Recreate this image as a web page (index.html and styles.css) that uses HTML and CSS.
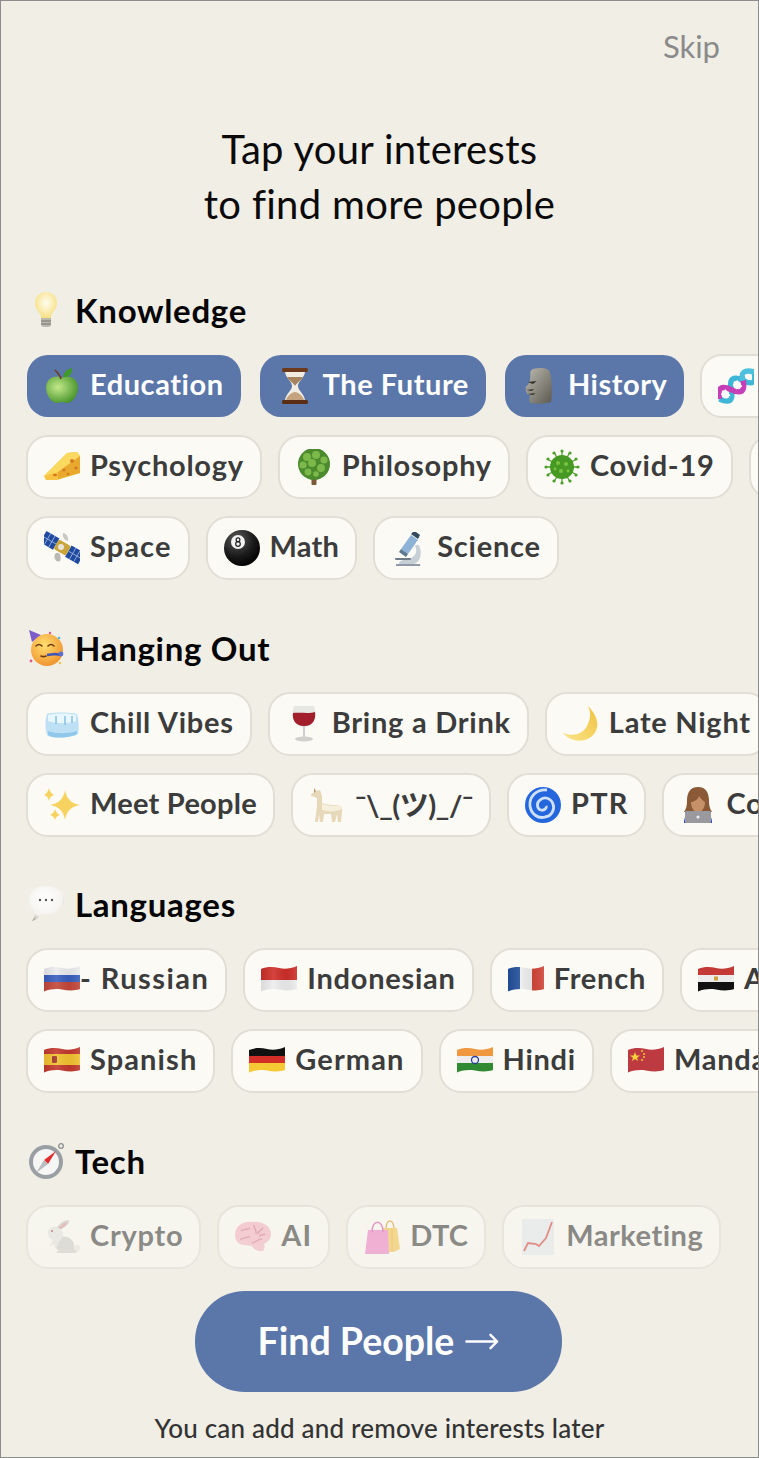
FILE: index.html
```html
<!DOCTYPE html>
<html lang="en">
<head>
<meta charset="utf-8">
<title>Interests</title>
<link rel="stylesheet" href="styles.css">
</head>
<body>
<svg class="sprite" width="0" height="0" aria-hidden="true"><defs>
<clipPath id="wave"><path d="M0 7C6 4.500 12 4.500 18 6S30 6.500 36 4V27C30 29 24 28.500 18 27.500S6 27 0 29.500Z"/></clipPath>
<radialGradient id="face" cx=".42" cy=".35" r=".7"><stop offset="0" stop-color="#ffe070"/><stop offset="1" stop-color="#f0902c"/></radialGradient>
<linearGradient id="gray" x1="0" x2="1" y1="0" y2="1"><stop offset="0" stop-color="#bdbbb0"/><stop offset="1" stop-color="#5c5950"/></linearGradient>
<linearGradient id="flagshade" x1="0" x2="1" y1="0" y2="0"><stop offset="0" stop-color="#000" stop-opacity=".08"/><stop offset=".35" stop-color="#fff" stop-opacity=".1"/><stop offset=".7" stop-color="#000" stop-opacity=".05"/><stop offset="1" stop-color="#fff" stop-opacity=".1"/></linearGradient>
</defs></svg>
<main class="screen">
  <div class="topbar"><span class="skip">Skip</span></div>
  <h1 class="title">Tap your interests<br>to find more people</h1>

  <section class="group group-first">
    <h2 class="group-title">
      <svg class="emoji" viewBox="0 0 36 36"><defs><radialGradient id="bulb" cx=".5" cy=".4" r=".6"><stop offset="0" stop-color="#fffdf0"/><stop offset="1" stop-color="#f6de7e"/></radialGradient></defs><path fill="url(#bulb)" d="M18 0C11 0 7 5 7 11c0 5 3 8 5 11 1 2 1 3 1 5h10c0-2 0-3 1-5 2-3 5-6 5-11C29 5 25 0 18 0Z"/><path fill="#b9b7ae" d="M13 26h10v6a3 3 0 0 1-3 3h-4a3 3 0 0 1-3-3Z"/><path stroke="#77756d" stroke-width="1" d="M13 29h10M13 32h10"/></svg>
      Knowledge
    </h2>
    <div class="row row-on">
      <div class="chip chip-on"><svg class="emoji" viewBox="0 0 36 36"><defs><radialGradient id="apple" cx=".38" cy=".4" r=".7"><stop offset="0" stop-color="#c4e98a"/><stop offset="1" stop-color="#3f8f25"/></radialGradient></defs><path fill="url(#apple)" d="M18 10C14 7 3 8 2 19c0 9 6 16 11 16 2 0 4-1 5-1s3 1 5 1c5 0 11-7 11-16C33 8 22 7 18 10Z"/><path fill="none" stroke="#6b3e1e" stroke-width="1.6" d="M17 11C16 7 14 5 11 2"/><path fill="#3f9a2a" d="M19 9C20 4 23 1 28 0 29 5 25 10 19 9Z"/></svg><span>Education</span></div>
      <div class="chip chip-on"><svg class="emoji" viewBox="0 0 36 36"><path fill="#f0ece2" d="M8 3h20c0 7-7 10-7 15s7 8 7 15H8c0-7 7-10 7-15S8 10 8 3Z"/><path fill="#a5845f" d="M10 9h16c-2 4-7 6-8 9-1-3-6-5-8-9Z"/><path fill="#c4a37e" d="M9 32c1-4 6-8 9-8s8 4 9 8Z"/><rect x="5" width="26" height="4" rx="1.5" fill="#6e3a1c"/><rect x="5" y="32" width="26" height="4" rx="1.5" fill="#5a2d14"/></svg><span>The Future</span></div>
      <div class="chip chip-on"><svg class="emoji" viewBox="0 0 36 36"><g transform="translate(-6 0) scale(1.300 1)"><path fill="url(#gray)" d="M13 1c6-2 12-1 13 3 2 8 2 21 1 30-5 2-12 2-16 1-1-3-1-5 0-8-2 0-3-1-3-3-1-1-1-2 0-3-1-1-1-2 1-4 2-3 2-7 2-11 0-2 0-4 2-5Z"/><path fill="#34322d" d="M9 14l7-1-3 3Zm-1 8 6-1-2 2Zm1 4 6-1-2 2Z"/></g></svg><span>History</span></div>
      <div class="chip chip-after-on"><svg class="emoji" viewBox="0 0 36 36"><g fill="none" stroke-width="5.500" transform="rotate(-38 18 18)"><path stroke="#3fb6d6" d="M-3 18C2 28 7 28 12 18S22 8 27 18S36 28 41 18"/><path stroke="#c63fb9" d="M-3 18C2 8 7 8 12 18S22 28 27 18"/><path stroke="#4cc0dc" d="M27 18C30 10 35 10 41 18"/><path stroke="#fff" stroke-width="1.600" d="M2 15v6M7 14v8M17 15v6M22 14v8M32 15v6"/></g></svg><span>Biology</span></div>
    </div>
    <div class="row">
      <div class="chip"><svg class="emoji" viewBox="0 0 36 36"><path fill="#f7c341" d="M0 27 23 4 33 3 36 7V24L13 31 2 31Z"/><path fill="#fbd860" d="M0 27 23 4 33 3 36 7 14 23Z"/><path fill="#e9a92d" d="M14 23 36 7V24L14 30Z"/><g fill="#d47a22"><circle cx="20" cy="21" r="1.6"/><circle cx="28" cy="12" r="2"/><circle cx="32" cy="19" r="1.6"/><ellipse cx="11" cy="26" rx="2.2" ry="1.2"/><circle cx="24" cy="25" r="1.3"/></g></svg><span>Psychology</span></div>
      <div class="chip"><svg class="emoji" viewBox="0 0 36 36"><rect x="15.5" y="26" width="5" height="10" rx="1" fill="#7a5a3a"/><circle cx="18" cy="15" r="16" fill="#4c8a2e"/><g fill="#7cb84a"><circle cx="11" cy="8" r="4"/><circle cx="20" cy="6" r="4"/><circle cx="28" cy="11" r="3.6"/><circle cx="7" cy="16" r="3.6"/><circle cx="16" cy="14" r="4"/><circle cx="25" cy="19" r="4"/><circle cx="12" cy="23" r="3.4"/><circle cx="20" cy="25" r="2.8"/></g></svg><span>Philosophy</span></div>
      <div class="chip"><svg class="emoji" viewBox="0 0 36 36"><g stroke="#4f9e2c" stroke-width="1.3"><path d="M1 18h34M3 26 33 10M10 33 26 3M18 1v34M26 33 10 3M33 26 3 10"/></g><g fill="#4f9e2c"><circle cx="34" cy="18" r="1.6"/><circle cx="32" cy="26" r="1.6"/><circle cx="26" cy="32" r="1.6"/><circle cx="18" cy="34" r="1.6"/><circle cx="10" cy="32" r="1.6"/><circle cx="4" cy="26" r="1.6"/><circle cx="2" cy="18" r="1.6"/><circle cx="4" cy="10" r="1.6"/><circle cx="10" cy="4" r="1.6"/><circle cx="18" cy="2" r="1.6"/><circle cx="26" cy="4" r="1.6"/><circle cx="32" cy="10" r="1.6"/></g><circle cx="18" cy="18" r="12" fill="#469a24"/><g fill="#7dc142"><circle cx="14" cy="14" r="2"/><circle cx="22" cy="15" r="2"/><circle cx="17" cy="22" r="2"/><circle cx="24" cy="22" r="1.4"/><circle cx="11" cy="20" r="1.4"/></g></svg><span>Covid-19</span></div>
      <div class="chip chip-stub"></div>
    </div>
    <div class="row">
      <div class="chip"><svg class="emoji" viewBox="0 0 36 36"><g transform="rotate(30 18 18)"><rect x="-4" y="11" width="15" height="13" fill="#1f4aa0"/><rect x="25" y="11" width="15" height="13" fill="#1f4aa0"/><path stroke="#9fb6dd" stroke-width=".8" d="M1 11v13M6 11v13M30 11v13M35 11v13M-4 17.5h15M25 17.5h15"/><rect x="11" y="12" width="14" height="11" rx="2" fill="#c9a53c"/></g><circle cx="17" cy="17" r="3" fill="#e8e4dc"/><path fill="#b9b9b4" d="M11 24c4-4 7 2 5 7-3 2-7-2-5-7Z"/><path fill="#c8c8c4" d="M19 3c3 0 6 4 5 8-3 0-6-4-5-8Z"/></svg><span class="ls-wide">Space</span></div>
      <div class="chip"><svg class="emoji" viewBox="0 0 36 36"><defs><radialGradient id="ball" cx=".35" cy=".25" r=".8"><stop offset="0" stop-color="#5a5a5a"/><stop offset=".6" stop-color="#1a1a1a"/><stop offset="1" stop-color="#000"/></radialGradient></defs><circle cx="18" cy="18" r="18" fill="url(#ball)"/><circle cx="14" cy="12" r="7" fill="#f2f2f2"/><g fill="none" stroke="#222" stroke-width="1.2"><circle cx="14" cy="9.8" r="1.9"/><circle cx="14" cy="14" r="2.3"/></g></svg><span class="ls-tight">Math</span></div>
      <div class="chip"><svg class="emoji" viewBox="0 0 36 36"><path fill="#8f9aa6" d="M5 34h24a2 2 0 0 1 0 2H5Z"/><path fill="#c6ced6" d="M8 34c0-4 5-4 9-5 8-2 10-8 7-13l3-2c5 7 3 18-4 20Z"/><path fill="#8fb3d6" d="M20 5 27 10 17 24l-7-5Z"/><path fill="#33495e" d="M22 2h3l4 3-2 4-7-5Z"/><path fill="#5e7890" d="M10 19l7 5-2 3-7-5Z"/><rect x="4" y="28" width="16" height="2" rx="1" fill="#6c7a88"/><circle cx="27" cy="13" r="2" fill="#fff"/></svg><span>Science</span></div>
    </div>
  </section>

  <section class="group">
    <h2 class="group-title">
      <svg class="emoji" viewBox="0 0 36 36"><path fill="#7c5cc8" d="M1 0 13 5 4 12Z"/><circle cx="19" cy="20" r="16" fill="url(#face)"/><g fill="none" stroke="#6b3a12" stroke-width="1.6" stroke-linecap="round"><path d="M8 16c2-2 4-2 6 0M20 16c2-2 4-2 6 0M13 26c2 1 3 1 5 0"/></g><path fill="none" stroke="#4254b5" stroke-width="2.6" d="M19 25l8-1 6 1"/><circle cx="33" cy="24" r="2.4" fill="#5c6fd0"/><g fill="#e2588a"><circle cx="3" cy="31" r="1.4"/><circle cx="22" cy="3" r="1.2"/><circle cx="31" cy="8" r="1.3" fill="#4fb7df"/><circle cx="32" cy="33" r="1.2" fill="#f2c53d"/></g></svg>
      Hanging Out
    </h2>
    <div class="row">
      <div class="chip"><svg class="emoji" viewBox="0 0 36 36"><path fill="#bde0f5" d="M3 8c3-2 25-2 30 0 2 6 2 16 1 20-4 4-28 5-31 1C1 24 1 13 3 8Z"/><path fill="#e8f6fd" d="M4 9c6-2 22-2 28 0v6c-9 3-19 3-28 0Z"/><path stroke="#8dc4e6" stroke-width="1.6" d="M12 10v8M21 10v9M28 10v7"/><path fill="#8fc8ea" d="M4 25c9 3 20 3 29 0v3c-6 4-24 5-29 1Z"/></svg><span>Chill Vibes</span></div>
      <div class="chip"><svg class="emoji" viewBox="0 0 36 36"><path fill="#e6e6e2" d="M8 0h20c3 8 2 20-10 21C6 20 5 8 8 0Z"/><path fill="#a11e2a" d="M7 7c6-1 16 1 22-1 1 6-1 14-11 14C9 20 6 13 7 7Z"/><rect x="17" y="20" width="2" height="12" fill="#cfcfcf"/><ellipse cx="18" cy="33" rx="9" ry="2.6" fill="#d0d0cc"/></svg><span>Bring a Drink</span></div>
      <div class="chip"><svg class="emoji" viewBox="0 0 36 36"><defs><linearGradient id="moon" x1="0" x2="1" y1="1" y2="0"><stop offset="0" stop-color="#fbe58b"/><stop offset="1" stop-color="#efc23f"/></linearGradient></defs><path fill="url(#moon)" d="M25 0C33 8 38 19 31 28 24 37 8 37 0 27 10 31 20 28 24 20 28 12 28 6 25 0Z"/></svg><span>Late Night</span></div>
    </div>
    <div class="row">
      <div class="chip"><svg class="emoji" viewBox="0 0 36 36"><g fill="#f6d260"><path d="M21 3Q23 16 36 18 23 20 21 33 19 20 6 18 19 16 21 3Z"/><path d="M5 1Q6 6 10 8 6 9 5 14 4 9 0 8 4 6 5 1Z"/><path d="M11 22Q12 26 16 28 12 29 11 33 10 29 6 28 10 26 11 22Z"/></g></svg><span class="ls-tight">Meet People</span></div>
      <div class="chip"><svg class="emoji" viewBox="0 0 36 36"><path fill="#e6d8b8" d="M5 1 7 4 11 3 13 9 13 16c5 2 12 2 16 2 3 0 5 3 4 7l-1 10h-3l-1-8-2 8h-3l-1-8H15l-1 8h-3l-1-8-1 8H6L8 19V11L2 9c0-3 2-4 3-3Z"/><path fill="#f6efdc" d="M13 17c5 2 14 2 18 1l2 4c-6 3-14 3-20 1Z"/><path fill="#b89d74" d="M5 1 7 4 5 6Z"/></svg><span class="kao">¯\_(ツ)_/¯</span></div>
      <div class="chip"><svg class="emoji" viewBox="0 0 36 36"><circle cx="18" cy="18" r="18" fill="#2467dd"/><path fill="none" stroke="#cfe0fb" stroke-width="2.8" d="M22 3C11 2 4 10 5 19c1 8 8 13 15 11 7-1 10-8 8-13-2-6-9-8-13-4-4 3-3 9 1 10 3 1 6-2 5-4"/></svg><span class="ls-wide">PTR</span></div>
      <div class="chip"><svg class="emoji" viewBox="0 0 36 36"><path fill="#2b43c4" d="M4 36c0-8 4-12 14-12s14 4 14 12Z"/><path fill="#8a5a36" d="M18 0C10 0 7 6 7 14c0 5-1 8-3 11h28c-2-3-3-6-3-11 0-8-3-14-11-14Z"/><path fill="#c69068" d="M11 15c2 0 7-2 8-6 2 3 4 5 6 6 0 6-3 10-7 10s-7-4-7-10Z"/><rect x="5" y="24" width="26" height="12" rx="1" fill="#9a9a9e"/><circle cx="18" cy="30" r="1.6" fill="#eee"/></svg><span>Coding</span></div>
    </div>
  </section>

  <section class="group group-snug">
    <h2 class="group-title">
      <svg class="emoji" viewBox="0 0 36 36"><defs><radialGradient id="bubble" cx=".45" cy=".35" r=".72"><stop offset="0" stop-color="#fff"/><stop offset=".7" stop-color="#f4f3ef"/><stop offset="1" stop-color="#a5a49e"/></radialGradient></defs><path fill="url(#bubble)" d="M18 0c10 0 18 6 18 14s-8 14-18 14c-2 0-3 0-5 0-2 3-5 6-9 7 2-3 3-6 2-10-3-3-5-7-5-11C1 6 8 0 18 0Z"/><g fill="#55544f"><circle cx="12" cy="14" r="1.2"/><circle cx="18" cy="14" r="1.2"/><circle cx="24" cy="14" r="1.2"/></g></svg>
      Languages
    </h2>
    <div class="row">
      <div class="chip"><svg class="emoji" viewBox="0 0 36 36"><g clip-path="url(#wave)"><rect width="36" height="14" fill="#ececf0"/><rect y="13" width="36" height="8" fill="#3a5fbf"/><rect y="20" width="36" height="12" fill="#c4473a"/><rect width="36" height="36" fill="url(#flagshade)"/></g></svg><span class="russian">- Russian</span></div>
      <div class="chip"><svg class="emoji" viewBox="0 0 36 36"><g clip-path="url(#wave)"><rect width="36" height="18" fill="#cf2f2a"/><rect y="18" width="36" height="14" fill="#ededed"/><rect width="36" height="36" fill="url(#flagshade)"/></g></svg><span>Indonesian</span></div>
      <div class="chip"><svg class="emoji" viewBox="0 0 36 36"><g clip-path="url(#wave)"><rect width="12" height="36" fill="#23509c"/><rect x="12" width="12" height="36" fill="#ededed"/><rect x="24" width="12" height="36" fill="#d2463a"/><rect width="36" height="36" fill="url(#flagshade)"/></g></svg><span>French</span></div>
      <div class="chip"><svg class="emoji" viewBox="0 0 36 36"><g clip-path="url(#wave)"><rect width="36" height="14" fill="#c43a36"/><rect y="13" width="36" height="8" fill="#ececec"/><rect y="20" width="36" height="12" fill="#111"/><rect x="16" y="14.500" width="4" height="4" fill="#c9a33a"/></g></svg><span>Arabic</span></div>
    </div>
    <div class="row">
      <div class="chip"><svg class="emoji" viewBox="0 0 36 36"><g clip-path="url(#wave)"><rect width="36" height="12" fill="#c4392e"/><rect y="11" width="36" height="12" fill="#f2c230"/><rect y="22" width="36" height="10" fill="#c4392e"/><rect x="8" y="13" width="5" height="7" rx="1" fill="#a5372a"/><rect width="36" height="36" fill="url(#flagshade)"/></g></svg><span class="ls-wide">Spanish</span></div>
      <div class="chip"><svg class="emoji" viewBox="0 0 36 36"><g clip-path="url(#wave)"><rect width="36" height="14" fill="#111"/><rect y="13" width="36" height="8" fill="#d32f28"/><rect y="20" width="36" height="12" fill="#f5c933"/></g></svg><span class="ls-wide">German</span></div>
      <div class="chip"><svg class="emoji" viewBox="0 0 36 36"><g clip-path="url(#wave)"><rect width="36" height="14" fill="#f0983f"/><rect y="13" width="36" height="8" fill="#ededed"/><rect y="20" width="36" height="12" fill="#2f8a32"/></g><circle cx="18" cy="17" r="3.500" fill="none" stroke="#2b3f96" stroke-width="1.300"/></svg><span>Hindi</span></div>
      <div class="chip"><svg class="emoji" viewBox="0 0 36 36"><g clip-path="url(#wave)"><rect width="36" height="36" fill="#bd3a40"/></g><path fill="#f5d43c" d="M7 9 8.300 12.500H12L9 14.700 10.100 18 7 16 3.900 18 5 14.700 2 12.500H5.700Z"/><g fill="#f5d43c"><circle cx="14" cy="8" r=".9"/><circle cx="16" cy="11" r=".9"/><circle cx="16" cy="14" r=".9"/><circle cx="14" cy="17" r=".9"/></g></svg><span>Mandarin</span></div>
    </div>
  </section>

  <section class="group">
    <h2 class="group-title">
      <svg class="emoji" viewBox="0 0 36 36"><circle cx="33" cy="3" r="2.300" fill="none" stroke="#8a8d90" stroke-width="1.300"/><circle cx="18" cy="19" r="17" fill="#9a9fa4"/><circle cx="18" cy="19" r="13" fill="#f6f6f4"/><path fill="#e22c2c" d="M28 8 20 21 16 17Z"/><path fill="#b9bcc0" d="M8 30 16 17 20 21Z"/></svg>
      Tech
    </h2>
    <div class="row">
      <div class="chip"><svg class="emoji" viewBox="0 0 36 36"><path fill="#cfcdca" d="M16 18c8-2 15 3 14 11 4 0 5 5 1 5H14c-2 0-2-2 0-2h1c-3-2-5-6-5-9Z"/><circle cx="33" cy="29" r="3" fill="#e8e6e3"/><path fill="#e6e4e1" d="M4 13c0-4 5-6 9-5 4 1 6 4 6 7 0 3-2 6-4 8l-2 5c-1 2-3 2-3 1l1-5-4 3c-1 0-2 0-1-1l3-5c-3-1-5-4-5-8Z"/><path fill="#c9c6c2" d="M13 9c2-5 8-8 12-8 1 2-2 7-8 9Z"/><path fill="#d99a9a" d="M15 9c2-3 5-5 8-6 0 2-3 5-6 7Z"/><circle cx="8" cy="12" r="1" fill="#a03a48"/></svg><span>Crypto</span></div>
      <div class="chip"><svg class="emoji" viewBox="0 0 36 36"><path fill="#f4b3c2" d="M17 3c-9-1-17 4-17 13 0 6 4 10 9 10l8 1c2 4 7 6 11 5 2-3 2-5 1-7 4-2 7-5 7-10 0-8-9-13-19-12Z"/><g fill="none" stroke="#d8768c" stroke-width="1.400"><path d="M6 12c3-3 7-1 9-3M5 20c4 0 7-3 10-2M19 6c0 4 3 5 2 9M17 24c4-1 6-4 10-4M28 9c-2 2-5 3-5 6M30 15c-2 1-4 1-6 2"/></g></svg><span class="ls-wide">AI</span></div>
      <div class="chip"><svg class="emoji" viewBox="0 0 36 36"><path fill="#f3c54a" d="M18 9h15l3 21-6 3H18Z"/><path stroke="#e8a835" stroke-width="1" d="M23 10v22M28 10v22"/><path fill="#ee7fc5" d="M4 11h20l1 24H1Z"/><path fill="none" stroke="#d65aab" stroke-width="1.500" d="M8 13c0-13 11-13 11 0"/><path fill="none" stroke="#d99a2a" stroke-width="1.300" d="M22 9c1-10 7-9 8 0"/></svg><span class="ls-tight">DTC</span></div>
      <div class="chip"><svg class="emoji" viewBox="0 0 36 36"><rect x="2" width="32" height="36" fill="#e4eaee"/><path fill="none" stroke="#d5423a" stroke-width="1.800" d="M4 32 8 24l8 1 3 2 7-8 6-16"/></svg><span class="ls-mid">Marketing</span></div>
    </div>
  </section>

  <footer class="dock">
    <button class="cta" type="button"><span>Find People</span><svg class="arrow" viewBox="0 0 36 20"><path fill="none" stroke="currentColor" stroke-width="2.600" stroke-linecap="round" stroke-linejoin="round" d="M1.500 10H34M27 3l7 7-7 7"/></svg></button>
    <p class="note">You can add and remove interests later</p>
  </footer>
</main>
</body>
</html>
```
FILE: styles.css
```css
* { box-sizing: border-box; }
html, body { margin: 0; padding: 0; }
body {
  width: 759px;
  height: 1458px;
  overflow: hidden;
  background: #f0eee5;
  font-family: "Lato", "Noto Sans", sans-serif;
}
.sprite { position: absolute; }
.screen {
  position: relative;
  width: 759px;
  height: 1458px;
  overflow: hidden;
}
.screen::after {
  content: "";
  position: absolute;
  inset: 0;
  border: 1px solid #8c8c8c;
  pointer-events: none;
}
.topbar {
  display: flex;
  justify-content: flex-end;
  height: 40px;
  margin-top: 26px;
  padding-right: 39px;
}
.skip {
  font-size: 31px;
  line-height: 40px;
  color: #8a8a8a;
}
.title {
  margin: 56px 0 0;
  text-align: center;
  font-size: 40px;
  line-height: 55px;
  font-weight: 400;
  letter-spacing: .3px;
  color: #0a0a0a;
}
.group { margin-top: 51px; }
.group-first { margin-top: 61px; }
.group-snug { margin-top: 50px; }
.group-title {
  display: flex;
  align-items: center;
  gap: 11px;
  height: 36px;
  margin: 0 0 25px;
  padding: 0 0 2px 28px;
  font-size: 33px;
  font-weight: 700;
  letter-spacing: .7px;
  color: #050505;
  white-space: nowrap;
}
.emoji {
  flex: none;
  width: 36px;
  height: 36px;
}
.row {
  display: flex;
  gap: 16px;
  height: 64px;
  margin-bottom: 17px;
  padding-left: 26px;
}
.row-on { gap: 17px; }
.row:last-child { margin-bottom: 0; }
.chip {
  flex: none;
  display: flex;
  align-items: center;
  gap: 10px;
  height: 64px;
  padding: 0 16px;
  border: 2px solid #e1dfd5;
  border-radius: 22px;
  background: #fbfaf5;
  font-size: 29px;
  font-weight: 700;
  letter-spacing: .75px;
  color: #3c3c3c;
  white-space: nowrap;
}
.chip > span { margin-bottom: 5px; }
.chip-on {
  border: 1px solid transparent;
  padding: 0 17px;
  background: #5b76a9;
  background-clip: padding-box;
  letter-spacing: .55px;
  color: #fff;
}
.chip-after-on { margin-left: -2px; }
.chip-stub { width: 120px; }
.ls-tight { letter-spacing: .25px; }
.ls-mid { letter-spacing: .5px; }
.ls-wide { letter-spacing: 1.100px; }
.russian { margin-left: -10px; letter-spacing: 1.450px; }
.kao {
  font-family: "Lato", "Noto Sans CJK JP", sans-serif;
  letter-spacing: -.45px;
}
.dock {
  position: absolute;
  left: 0;
  right: 0;
  bottom: 0;
  height: 272px;
  display: flex;
  flex-direction: column;
  align-items: center;
  justify-content: flex-end;
  background: linear-gradient(to bottom, rgba(240,238,229,0) 0, rgba(240,238,229,.4) 24px, rgba(240,238,229,.48) 84px, #f0eee5 100px);
}
.cta {
  display: flex;
  align-items: center;
  justify-content: center;
  gap: 11px;
  width: 367px;
  height: 101px;
  margin-right: 2px;
  border: 0;
  border-radius: 50px;
  background: #5b76a9;
  color: #fff;
  font: 700 37.500px "Lato", "Noto Sans", sans-serif;
}
.cta > span { margin-bottom: 3px; }
.arrow { width: 34px; height: 19px; }
.note {
  margin: 22px 0 16px;
  font-size: 26px;
  line-height: 28px;
  font-weight: 500;
  letter-spacing: .2px;
  color: #333;
}
```
